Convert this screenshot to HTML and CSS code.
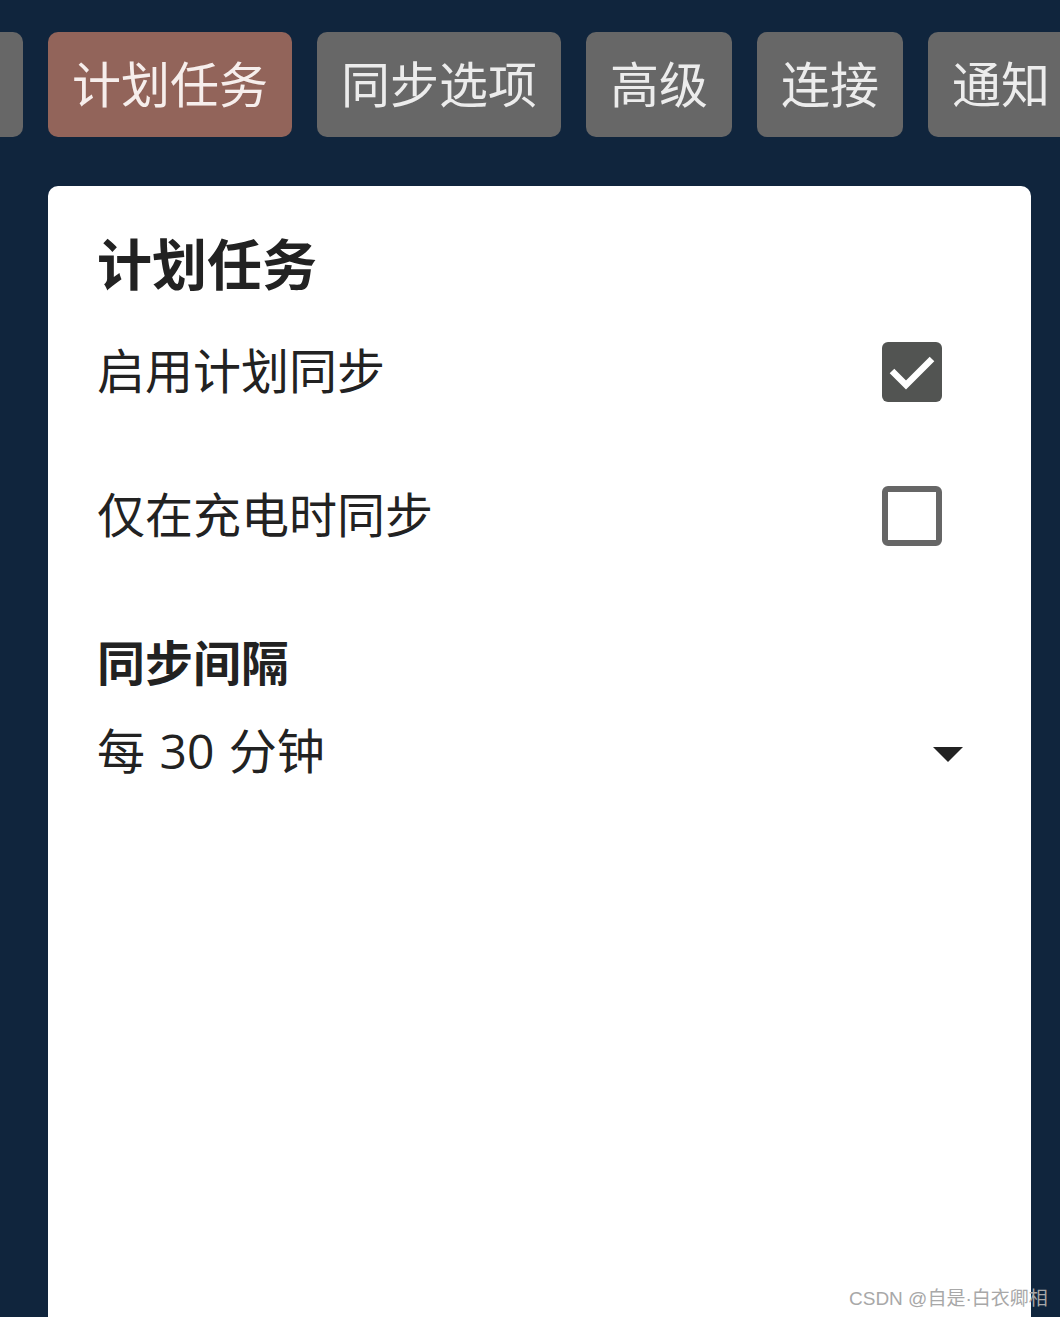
FILE: index.html
```html
<!DOCTYPE html>
<html lang="zh-CN">
<head>
<meta charset="utf-8">
<title>计划任务</title>
<link rel="stylesheet" href="styles.css">
</head>
<body>
<div class="screen">
  <nav class="tabs">
    <div class="tab">设备</div>
    <div class="tab active">计划任务</div>
    <div class="tab">同步选项</div>
    <div class="tab">高级</div>
    <div class="tab">连接</div>
    <div class="tab">通知</div>
  </nav>
  <main class="card">
    <h1 class="title">计划任务</h1>
    <div class="row">
      <span class="label">启用计划同步</span>
      <span class="checkbox checked">
        <svg viewBox="0 0 60 60" width="60" height="60"><path d="M10 29 L24 43 L50 17" fill="none" stroke="#fff" stroke-width="6.5"/></svg>
      </span>
    </div>
    <div class="row">
      <span class="label">仅在充电时同步</span>
      <span class="checkbox"></span>
    </div>
    <h2 class="section">同步间隔</h2>
    <div class="select">
      <span class="label value">每 30 分钟</span>
      <svg class="arrow" viewBox="0 0 30 16" width="30" height="16"><path d="M0 0 L30 0 L15 15 Z" fill="#222"/></svg>
    </div>
  </main>
  <div class="watermark">CSDN @自是·白衣卿相</div>
</div>
</body>
</html>
```

FILE: styles.css
```css
html, body {
  margin: 0;
  padding: 0;
}
body {
  background: #10253d;
  font-family: "Noto Sans CJK SC", "Noto Sans", sans-serif;
  color: #222;
}
.screen {
  position: relative;
  width: 1060px;
  height: 1317px;
  overflow: hidden;
  display: flex;
  flex-direction: column;
}
.tabs {
  display: flex;
  gap: 25px;
  padding-top: 32px;
  margin-left: -123px;
  white-space: nowrap;
}
.tab {
  flex: none;
  height: 105px;
  padding: 0 24px 6px;
  box-sizing: border-box;
  border-radius: 10px;
  background: #676767;
  color: #ececec;
  font-size: 49px;
  line-height: 60px;
  display: flex;
  align-items: center;
}
.tab.active {
  background: #92645a;
  color: #f6eeec;
}
.card {
  flex: 1;
  margin: 49px 0 0 48px;
  width: 983px;
  box-sizing: border-box;
  background: #fff;
  border-radius: 10px 10px 0 0;
  padding: 45px 68px 0 49px;
}
.title {
  margin: 0;
  font-size: 55px;
  font-weight: 700;
  line-height: 60px;
  color: #222;
}
.row {
  height: 144px;
  margin-top: 9px;
  display: flex;
  align-items: center;
  justify-content: space-between;
}
.row + .row {
  margin-top: 0;
}
.label {
  font-size: 48px;
  line-height: 60px;
  color: #222;
}
.row .label {
  padding-bottom: 9px;
}
.checkbox {
  width: 60px;
  height: 60px;
  box-sizing: border-box;
  border: 6px solid #666;
  border-radius: 6px;
  margin-right: 21px;
  display: block;
}
.checkbox.checked {
  border: none;
  background: #525452;
}
.checkbox svg {
  display: block;
}
.section {
  margin: 42px 0 0;
  font-size: 48px;
  font-weight: 700;
  line-height: 60px;
  color: #222;
}
.select {
  margin-top: 29px;
  height: 60px;
  display: flex;
  align-items: center;
  justify-content: space-between;
}
.value {
  font-family: "Open Sans", "Noto Sans CJK SC", sans-serif;
  padding-top: 4px;
  word-spacing: 2px;
}
.arrow {
  display: block;
  width: 30px;
  height: 16px;
  margin-top: 12px;
}
.watermark {
  position: absolute;
  left: 849px;
  top: 1283px;
  font-family: "Liberation Sans", "Noto Sans CJK SC", sans-serif;
  font-size: 19px;
  color: #a8a8a8;
  white-space: nowrap;
}
```
